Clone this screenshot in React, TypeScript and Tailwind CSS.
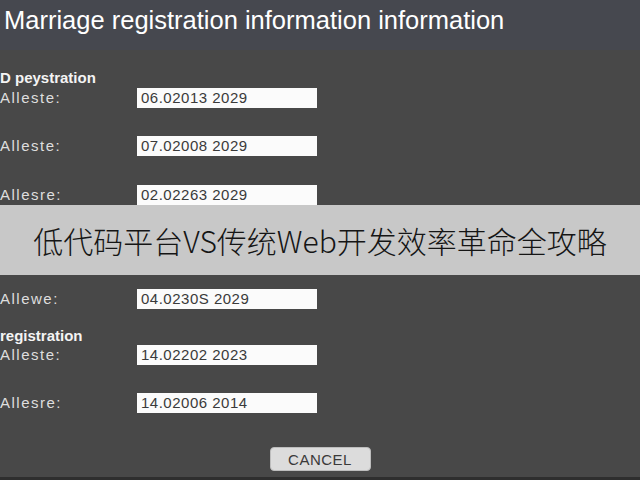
import React from "react";

const font = { fontFamily: '"Liberation Sans", Arial, sans-serif' };

function Row({ label, value, className }: { label: string; value: string; className: string }) {
  return (
    <div className={`flex items-center h-[20px] ${className}`}>
      <div className="w-[137px] text-[15px] leading-[20px] tracking-[1.5px] text-[#dedede]">{label}</div>
      <div className="w-[180px] h-[20px] bg-[#fbfbfb] text-[15px] leading-[20px] px-[4px] text-[#3a3a3a] tracking-[0.5px]">{value}</div>
    </div>
  );
}

function Section({ text, className }: { text: string; className: string }) {
  return <div className={`h-[16px] text-[15px] leading-[16px] font-bold text-[#f4f4f4] ${className}`}>{text}</div>;
}

export default function App() {
  return (
    <div className="relative w-[640px] h-[480px] overflow-hidden bg-[#484848] flex flex-col" style={font}>
      <div className="h-[50px] bg-[#46484f] flex items-center pl-[4px] pb-[9px]">
        <span className="text-[25.5px] text-white leading-none">Marriage registration information information</span>
      </div>
      <div className="flex flex-col pt-[20px]">
        <Section text="D peystration" className="" />
        <Row label="Alleste:" value="06.02013 2029" className="mt-[2px]" />
        <Row label="Alleste:" value="07.02008 2029" className="mt-[28px]" />
        <Row label="Allesre:" value="02.02263 2029" className="mt-[29px]" />
        <Section text="D number" className="mt-[17px]" />
        <Row label="Allese:" value="04.02015 2022" className="mt-[2px]" />
        <Row label="Allewe:" value="04.0230S 2029" className="mt-[29px]" />
        <Section text="registration" className="mt-[19px]" />
        <Row label="Alleste:" value="14.02202 2023" className="mt-[1px]" />
        <Row label="Allesre:" value="14.02006 2014" className="mt-[28px]" />
        <div className="flex justify-center mt-[34px]">
          <button className="w-[101px] h-[24px] rounded-[4px] bg-[#dcdcdc] border border-[#bdbdbd] text-[15px] text-[#3a3a3a] tracking-[0.5px] leading-none">
            CANCEL
          </button>
        </div>
      </div>
      <div className="absolute left-0 bottom-0 w-full h-[3px] bg-[#2e2e2e]" />
      <div className="absolute left-0 top-[205px] w-full h-[70px] bg-[#c8c8c8] flex items-center justify-center">
        <span
          className="text-[30px] font-light text-[#151515] leading-none"
          style={{ fontFamily: '"Noto Sans CJK SC", "Liberation Sans", sans-serif' }}
        >
          低代码平台VS传统Web开发效率革命全攻略
        </span>
      </div>
    </div>
  );
}
